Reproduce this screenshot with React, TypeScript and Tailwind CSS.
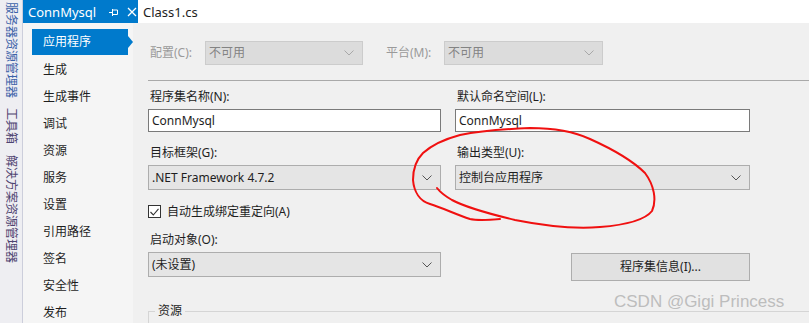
import React from "react";

const sideItems = ["生成", "生成事件", "调试", "资源", "服务", "设置", "引用路径", "签名", "安全性", "发布"];

function Chevron({ color }: { color: string }) {
  return (
    <svg width="10" height="6" viewBox="0 0 10 6" className="shrink-0">
      <polyline points="0.5,0.5 5,5 9.5,0.5" fill="none" stroke={color} strokeWidth="1" />
    </svg>
  );
}

function Select({ text, disabled, className }: { text: string; disabled?: boolean; className: string }) {
  return (
    <div
      className={
        disabled
          ? `flex items-center justify-between border border-[#cccccc] bg-[#dcdcdc] pl-[3px] pr-[8px] text-[#838383] ${className}`
          : `flex items-center justify-between border border-[#adadad] bg-[#e5e5e5] pl-[3px] pr-[8px] text-[#1e1e1e] ${className}`
      }
    >
      <span className="leading-[16px]">{text}</span>
      <Chevron color={disabled ? "#a8a8a8" : "#555555"} />
    </div>
  );
}

function Input({ value }: { value: string }) {
  return (
    <div className="flex h-[23px] items-center border border-[#7a7a7a] bg-white pl-[3px] text-[#1e1e1e]">
      <span className="leading-[16px]">{value}</span>
    </div>
  );
}

export default function App() {
  return (
    <div className="relative flex h-[323px] w-[809px] overflow-hidden bg-[#f0f0f0] font-['Segoe_UI','Noto_Sans','Noto_Sans_CJK_SC',sans-serif] text-[12px]">
      {/* tool window strip */}
      <div className="flex w-[23px] shrink-0 flex-col items-center border-r border-[#cccedb] bg-[#eeeef2] pt-[2px] text-[12px] leading-[14px]">
        <div className="h-[106px] text-[#3c62a8] [text-orientation:sideways] [writing-mode:vertical-rl]">服务器资源管理器</div>
        <div className="h-[47px] text-[#4e4470] [text-orientation:sideways] [writing-mode:vertical-rl]">工具箱</div>
        <div className="text-[#4e4470] [text-orientation:sideways] [writing-mode:vertical-rl]">解决方案资源管理器</div>
      </div>

      <div className="flex flex-1 flex-col">
        {/* tabs */}
        <div className="flex h-[23px] shrink-0 items-center bg-white">
          <div className="flex h-full w-[115px] items-center bg-[#007acc] pl-[5px] text-[13px] text-white">
            <span className="leading-[16px]">ConnMysql</span>
            <svg width="9" height="8" viewBox="0 0 9 8" className="ml-[13px]">
              <path d="M0 4.5H3M3.5 1V8M3.5 2H8.5V6.5H3.5" fill="none" stroke="white" strokeWidth="1" />
            </svg>
            <svg width="10" height="10" viewBox="0 0 10 10" className="ml-[9px]">
              <path d="M1 1L9 9M9 1L1 9" stroke="white" strokeWidth="1.3" />
            </svg>
          </div>
          <span className="ml-[5px] text-[13px] leading-[16px] text-[#1e1e1e]">Class1.cs</span>
        </div>

        <div className="flex flex-1">
          {/* property page nav */}
          <div className="w-[110px] shrink-0 bg-[#f5f5f5] pt-[6px]">
            <div className="relative mb-[1px] ml-[9px] flex h-[26px] w-[96px] items-center bg-[#007acc] pl-[11px] text-white">
              <span className="leading-[16px]">应用程序</span>
              <span className="absolute right-[-5px] top-[7px] h-0 w-0 border-y-[6px] border-l-[5px] border-y-transparent border-l-[#007acc]" />
            </div>
            {sideItems.map((item) => (
              <div key={item} className="flex h-[27px] items-center pl-[20px] leading-[16px] text-[#1e1e1e]">
                {item}
              </div>
            ))}
          </div>

          {/* property page */}
          <div className="flex-1 pl-[15px] pt-[18px] text-[#1e1e1e]">
            <div className="flex h-[24px] items-center">
              <span className="w-[57px] pl-[2px] leading-[16px] text-[#9a9a9a]">配置(C):</span>
              <Select text="不可用" disabled className="h-[24px] w-[158px]" />
              <span className="ml-[21px] w-[60px] pl-[2px] leading-[16px] text-[#9a9a9a]">平台(M):</span>
              <Select text="不可用" disabled className="h-[24px] w-[159px]" />
            </div>

            <div className="mt-[15px] h-px bg-[#a9a9a9]" />

            <div className="flex gap-[14px]">
              <div className="flex w-[293px] flex-col">
                <div className="h-[28px] pl-[2px] pt-[8px] leading-[16px]">程序集名称(N):</div>
                <Input value="ConnMysql" />
                <div className="h-[33px] pl-[2px] pt-[13px] leading-[16px]">目标框架(G):</div>
                <Select text=".NET Framework 4.7.2" className="h-[25px]" />
                <div className="mt-[15px] flex h-[13px] items-center">
                  <div className="flex h-[13px] w-[13px] items-center justify-center border border-[#333333] bg-white">
                    <svg width="9" height="8" viewBox="0 0 9 8">
                      <polyline points="0.5,4 3.3,7 8.5,0.8" fill="none" stroke="#333333" strokeWidth="1.1" />
                    </svg>
                  </div>
                  <span className="ml-[6px] leading-[16px]">自动生成绑定重定向(A)</span>
                </div>
                <div className="h-[34px] pl-[2px] pt-[14px] leading-[16px]">启动对象(O):</div>
                <Select text="(未设置)" className="h-[25px]" />
              </div>

              <div className="flex w-[295px] flex-col">
                <div className="h-[28px] pl-[2px] pt-[8px] leading-[16px]">默认命名空间(L):</div>
                <Input value="ConnMysql" />
                <div className="h-[33px] pl-[2px] pt-[13px] leading-[16px]">输出类型(U):</div>
                <Select text="控制台应用程序" className="h-[25px]" />
                <div className="h-[62px]" />
                <div className="ml-auto mt-[1px] flex h-[28px] w-[179px] items-center justify-center border border-[#adadad] bg-[#e1e1e1]">
                  <span className="leading-[16px]">程序集信息(I)...</span>
                </div>
              </div>
            </div>

            <div className="relative mt-[30px] h-[30px] border-l border-t border-[#d5d5d5]">
              <span className="absolute left-[6px] top-[-9px] bg-[#f0f0f0] px-[3px] leading-[16px]">资源</span>
            </div>
          </div>
        </div>
      </div>

      {/* watermark */}
      <span className="pointer-events-none absolute left-[614px] top-[292px] font-['Liberation_Sans',sans-serif] text-[17px] leading-[20px] text-[#bdbdbd]">
        CSDN @Gigi Princess
      </span>

      {/* hand-drawn annotation */}
      <svg className="pointer-events-none absolute left-0 top-0" width="809" height="323" viewBox="0 0 809 323">
        <path
          d="M500 219 C490 220 478 221 470 219 C455 214 443 208 430 204 C420 201 414 192 413 180 C413 170 416 160 423 153 C432 145 445 139 460 135 C480 131 505 129 530 128 C555 128 575 132 590 139 C610 148 632 160 645 173 C654 185 657 200 652 211 C645 220 625 225 600 227 C575 229 545 226 515 220 C490 214 465 207 452 200 C445 196 440 192 437 188"
          fill="none"
          stroke="#f01010"
          strokeWidth="2"
          strokeLinecap="round"
        />
      </svg>
    </div>
  );
}
